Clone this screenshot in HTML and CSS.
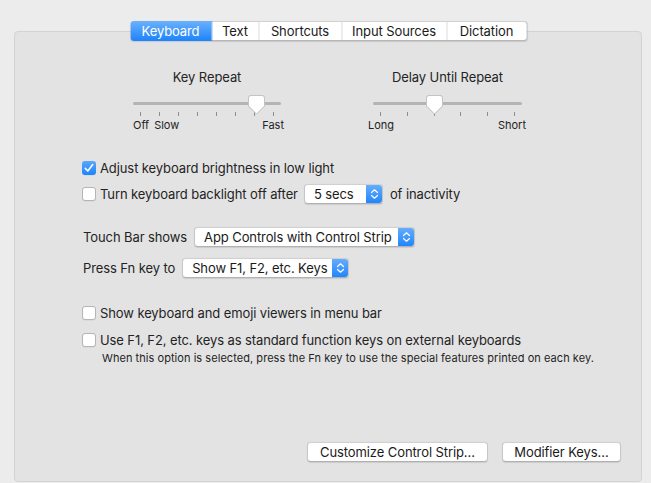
FILE: index.html
```html
<!DOCTYPE html>
<html>
<head>
<meta charset="utf-8">
<link rel="stylesheet" href="styles.css">
</head>
<body>
<div class="window">
  <div class="tabs">
    <div class="tab selected">Keyboard</div>
    <div class="tab tab-text">Text</div>
    <div class="tab tab-short">Shortcuts</div>
    <div class="tab tab-input">Input Sources</div>
    <div class="tab tab-dict last">Dictation</div>
  </div>
  <div class="panel">
    <div class="sliders">
      <div class="slider slider-repeat">
        <div class="slider-title">Key Repeat</div>
        <div class="slider-area">
          <div class="track"></div>
          <div class="ticks">
            <i></i><i></i><i></i><i></i><i></i><i></i><i></i><i></i>
          </div>
          <svg class="thumb" style="left:115px" width="17" height="20" viewBox="0 0 17 20"><path d="M3 0.5 H14 A2.5 2.5 0 0 1 16.5 3 V11 L8.5 19 L0.5 11 V3 A2.5 2.5 0 0 1 3 0.5 Z" fill="#fff" stroke="#c4c4c4"/></svg>
        </div>
        <div class="slider-labels repeat-labels">
          <span>Off</span><span class="slow">Slow</span><span class="end">Fast</span>
        </div>
      </div>
      <div class="slider slider-delay">
        <div class="slider-title">Delay Until Repeat</div>
        <div class="slider-area">
          <div class="track"></div>
          <div class="ticks">
            <i></i><i></i><i></i><i></i><i></i><i></i>
          </div>
          <svg class="thumb" style="left:53px" width="17" height="20" viewBox="0 0 17 20"><path d="M3 0.5 H14 A2.5 2.5 0 0 1 16.5 3 V11 L8.5 19 L0.5 11 V3 A2.5 2.5 0 0 1 3 0.5 Z" fill="#fff" stroke="#c4c4c4"/></svg>
        </div>
        <div class="slider-labels delay-labels">
          <span>Long</span><span class="end">Short</span>
        </div>
      </div>
    </div>

    <div class="row row-first">
      <span class="check checked"><svg width="14" height="14" viewBox="0 0 14 14"><path d="M3.3 7.4 L5.8 10 L10.7 3.6" fill="none" stroke="#fff" stroke-width="1.6" stroke-linecap="round" stroke-linejoin="round"/></svg></span>
      <span>Adjust keyboard brightness in low light</span>
    </div>
    <div class="row row-second">
      <span class="check"></span>
      <span>Turn keyboard backlight off after</span>
      <span class="popup popup-secs"><span class="popup-text">5 secs</span><span class="popup-arrow"><svg width="9" height="12" viewBox="0 0 9 12"><path d="M1.5 4.5 L4.5 1.8 L7.5 4.5 M1.5 7.5 L4.5 10.2 L7.5 7.5" fill="none" stroke="#fff" stroke-width="1.2" stroke-linecap="round" stroke-linejoin="round"/></svg></span></span>
      <span>of inactivity</span>
    </div>

    <div class="row row-touch">
      <span class="label">Touch Bar shows</span>
      <span class="popup popup-touch"><span class="popup-text">App Controls with Control Strip</span><span class="popup-arrow"><svg width="9" height="12" viewBox="0 0 9 12"><path d="M1.5 4.5 L4.5 1.8 L7.5 4.5 M1.5 7.5 L4.5 10.2 L7.5 7.5" fill="none" stroke="#fff" stroke-width="1.2" stroke-linecap="round" stroke-linejoin="round"/></svg></span></span>
    </div>
    <div class="row row-fn">
      <span class="label">Press Fn key to</span>
      <span class="popup popup-fn"><span class="popup-text">Show F1, F2, etc. Keys</span><span class="popup-arrow"><svg width="9" height="12" viewBox="0 0 9 12"><path d="M1.5 4.5 L4.5 1.8 L7.5 4.5 M1.5 7.5 L4.5 10.2 L7.5 7.5" fill="none" stroke="#fff" stroke-width="1.2" stroke-linecap="round" stroke-linejoin="round"/></svg></span></span>
    </div>

    <div class="row row-viewers">
      <span class="check"></span>
      <span>Show keyboard and emoji viewers in menu bar</span>
    </div>
    <div class="row row-fkeys">
      <span class="check"></span>
      <span>Use F1, F2, etc. keys as standard function keys on external keyboards</span>
    </div>
    <div class="note">When this option is selected, press the Fn key to use the special features printed on each key.</div>

    <div class="buttons">
      <div class="button btn-strip">Customize Control Strip…</div>
      <div class="button btn-mod">Modifier Keys…</div>
    </div>
  </div>
</div>
</body>
</html>
```

FILE: styles.css
```css
* { box-sizing: border-box; }
html, body {
  margin: 0;
  padding: 0;
  background: #ececec;
  width: 651px;
  height: 483px;
  overflow: hidden;
}
body {
  font-family: "Inter", "Liberation Sans", sans-serif;
  font-size: 13px;
  letter-spacing: -0.1px;
  color: #232323;
}
.window {
  padding: 21px 9px 0 14px;
}
.tabs {
  position: relative;
  z-index: 1;
  display: flex;
  width: 397px;
  margin: 0 auto -10px auto;
  transform: translateX(0.5px);
  height: 20px;
  background: #fff;
  border: 1px solid #c9c9c9;
  border-top-color: #d2d2d2;
  border-bottom-color: #b8b8b8;
  border-radius: 4px;
  box-shadow: 0 0.5px 1px rgba(0,0,0,0.12);
}
.tab {
  flex: none;
  height: 18px;
  line-height: 18px;
  text-align: center;
  border-right: 1px solid #dcdcdc;
  color: #1a1a1a;
  white-space: nowrap;
}
.tab-text { width: 47px; }
.tab-short { width: 83px; }
.tab-input { width: 105px; }
.tab-dict { width: 79px; }
.tab.last { border-right: none; }
.tab.selected {
  width: 82px;
  margin: -1px 0 -1px -1px;
  height: 20px;
  line-height: 20px;
  border-radius: 4px 0 0 4px;
  border-right: 1px solid #1f7ff0;
  color: #fff;
  background: linear-gradient(#6bb1fc, #1c83fb);
}
.panel {
  height: 451px;
  background: #e3e3e3;
  border: 1px solid #d3d3d3;
  border-radius: 4px;
  display: flex;
  flex-direction: column;
  padding: 37px 20px 19px 67px;
}
.sliders {
  display: flex;
  margin-left: 51px;
  gap: 92px;
}
.slider { width: 148px; }
.slider-delay { width: 149px; }
.slider-title {
  text-align: center;
  line-height: 16px;
  height: 16px;
}
.slider-area {
  position: relative;
  height: 22px;
  margin-top: 9px;
}
.track {
  position: absolute;
  left: 0; right: 0;
  top: 8px;
  height: 3px;
  border-radius: 2px;
  background: #b4b4b4;
}
.ticks {
  position: absolute;
  left: 7px; right: 7px;
  top: 18px;
  display: flex;
  justify-content: space-between;
}
.ticks i {
  display: block;
  width: 1px;
  height: 4px;
  background: #8e8e8e;
}
.thumb {
  position: absolute;
  top: 1px;
  filter: drop-shadow(0 0.5px 0.5px rgba(0,0,0,0.15));
}
.slider-labels {
  display: flex;
  font-size: 11px;
  line-height: 13px;
  margin-top: 3px;
  letter-spacing: 0;
}
.slider-labels .end { margin-left: auto; }
.repeat-labels { margin-right: -3px; }
.repeat-labels .slow { margin-left: 5px; }
.delay-labels { margin-left: -5px; margin-right: -4px; }

.row {
  display: flex;
  align-items: center;
  height: 20px;
  white-space: nowrap;
}
.row-first { margin-top: 26px; }
.row-second { margin-top: 6px; }
.row-touch { margin-top: 23px; margin-left: 1px; }
.row-fn { margin-top: 11px; margin-left: 1px; }
.row-viewers { margin-top: 25px; }
.row-fkeys { margin-top: 7px; }

.check {
  flex: none;
  width: 14px;
  height: 14px;
  margin-right: 4px;
  background: #fff;
  border: 1px solid #b5b5b5;
  border-radius: 3px;
  box-shadow: 0 0.5px 0.5px rgba(0,0,0,0.08);
  display: inline-flex;
  align-items: center;
  justify-content: center;
}
.check.checked {
  border: none;
  background: linear-gradient(#5aa7fc, #1c84fb);
}
.check svg { display: block; }

.popup {
  flex: none;
  display: inline-flex;
  height: 20px;
  background: #fff;
  border: 1px solid #c6c6c6;
  border-top-color: #d0d0d0;
  border-bottom-color: #b2b2b2;
  border-radius: 4px;
  margin: 0 7px 0 6px;
  overflow: hidden;
  box-shadow: 0 0.5px 1px rgba(0,0,0,0.1);
}
.popup-text {
  flex: 1;
  line-height: 18px;
  padding-left: 9px;
  color: #1a1a1a;
}
.popup-arrow {
  flex: none;
  width: 17px;
  margin: -1px -1px -1px 0;
  background: linear-gradient(#69affc, #1d84fb);
  display: flex;
  align-items: center;
  justify-content: center;
}
.popup-secs { width: 79px; }
.popup-touch { width: 221px; margin-left: 7px; }
.popup-fn { width: 167px; margin-left: 7px; }

.note {
  font-size: 11px;
  line-height: 13px;
  letter-spacing: 0.05px;
  margin-top: 2px;
  margin-left: 20px;
  white-space: nowrap;
}
.buttons {
  margin-top: auto;
  display: flex;
  justify-content: flex-end;
  gap: 14px;
}
.button {
  height: 20px;
  line-height: 18px;
  text-align: center;
  background: #fff;
  border: 1px solid #c6c6c6;
  border-top-color: #d0d0d0;
  border-bottom-color: #b0b0b0;
  border-radius: 4px;
  box-shadow: 0 0.5px 1px rgba(0,0,0,0.1);
  color: #1a1a1a;
}
.btn-strip { width: 181px; }
.btn-mod { width: 119px; }
```
